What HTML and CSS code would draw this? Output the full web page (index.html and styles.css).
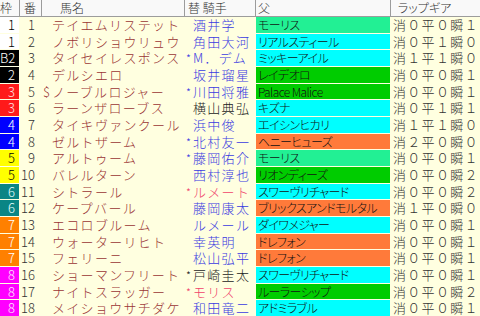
FILE: index.html
```html
<!DOCTYPE html>
<html lang="ja">
<head>
<meta charset="utf-8">
<link rel="stylesheet" href="styles.css">
</head>
<body>
<div class="sheet">
  <div class="head">
    <div class="h h-waku">枠</div>
    <div class="h h-ban">番</div>
    <div class="h h-name">馬名</div>
    <div class="h h-jockey">替 騎手</div>
    <div class="h h-sire">父</div>
    <div class="h h-lap">ラップギア</div>
  </div>

  <div class="row"><div class="waku w1">1</div><div class="ban">1</div><div class="name"><span class="mk"></span>テイエムリステット</div><div class="jockey"><span class="mk"></span>酒井学</div><div class="sire mint">モーリス</div><div class="lap">消０平０瞬１</div></div>
  <div class="row"><div class="waku w1">1</div><div class="ban">2</div><div class="name"><span class="mk"></span>ノボリショウリュウ</div><div class="jockey"><span class="mk"></span>角田大河</div><div class="sire cyan">リアルスティール</div><div class="lap">消０平１瞬０</div></div>
  <div class="row"><div class="waku w2">B2</div><div class="ban">3</div><div class="name"><span class="mk"></span>タイセイレスポンス</div><div class="jockey"><span class="mk">*</span>M．デム</div><div class="sire cyan">ミッキーアイル</div><div class="lap">消１平１瞬０</div></div>
  <div class="row"><div class="waku w2">2</div><div class="ban">4</div><div class="name"><span class="mk"></span>デルシエロ</div><div class="jockey"><span class="mk"></span>坂井瑠星</div><div class="sire green">レイデオロ</div><div class="lap">消０平０瞬１</div></div>
  <div class="row"><div class="waku w3">3</div><div class="ban">5</div><div class="name"><span class="mk">$</span>ノーブルロジャー</div><div class="jockey"><span class="mk">*</span>川田将雅</div><div class="sire green">Palace Malice</div><div class="lap">消０平０瞬１</div></div>
  <div class="row"><div class="waku w3">3</div><div class="ban">6</div><div class="name"><span class="mk"></span>ラーンザローブス</div><div class="jockey black"><span class="mk"></span>横山典弘</div><div class="sire cyan">キズナ</div><div class="lap">消０平１瞬１</div></div>
  <div class="row"><div class="waku w4">4</div><div class="ban">7</div><div class="name"><span class="mk"></span>タイキヴァンクール</div><div class="jockey"><span class="mk"></span>浜中俊</div><div class="sire cyan">エイシンヒカリ</div><div class="lap">消１平１瞬０</div></div>
  <div class="row"><div class="waku w4">4</div><div class="ban">8</div><div class="name"><span class="mk"></span>ゼルトザーム</div><div class="jockey"><span class="mk">*</span>北村友一</div><div class="sire orange">ヘニーヒューズ</div><div class="lap">消２平０瞬０</div></div>
  <div class="row"><div class="waku w5">5</div><div class="ban">9</div><div class="name"><span class="mk"></span>アルトゥーム</div><div class="jockey"><span class="mk">*</span>藤岡佑介</div><div class="sire mint">モーリス</div><div class="lap">消０平０瞬１</div></div>
  <div class="row"><div class="waku w5">5</div><div class="ban">10</div><div class="name"><span class="mk"></span>バレルターン</div><div class="jockey"><span class="mk"></span>西村淳也</div><div class="sire green">リオンディーズ</div><div class="lap">消０平０瞬２</div></div>
  <div class="row"><div class="waku w6">6</div><div class="ban">11</div><div class="name"><span class="mk"></span>シトラール</div><div class="jockey pink"><span class="mk">*</span>ルメート</div><div class="sire cyan">スワーヴリチャード</div><div class="lap">消０平０瞬２</div></div>
  <div class="row"><div class="waku w6">6</div><div class="ban">12</div><div class="name"><span class="mk"></span>ケープバール</div><div class="jockey"><span class="mk"></span>藤岡康太</div><div class="sire orange">ブリックスアンドモルタル</div><div class="lap">消１平０瞬０</div></div>
  <div class="row"><div class="waku w7">7</div><div class="ban">13</div><div class="name"><span class="mk"></span>エコロブルーム</div><div class="jockey"><span class="mk"></span>ルメール</div><div class="sire cyan">ダイワメジャー</div><div class="lap">消０平０瞬１</div></div>
  <div class="row"><div class="waku w7">7</div><div class="ban">14</div><div class="name"><span class="mk"></span>ウォーターリヒト</div><div class="jockey"><span class="mk"></span>幸英明</div><div class="sire orange">ドレフォン</div><div class="lap">消０平０瞬１</div></div>
  <div class="row"><div class="waku w7">7</div><div class="ban">15</div><div class="name"><span class="mk"></span>フェリーニ</div><div class="jockey"><span class="mk"></span>松山弘平</div><div class="sire orange">ドレフォン</div><div class="lap">消０平０瞬１</div></div>
  <div class="row"><div class="waku w8">8</div><div class="ban">16</div><div class="name"><span class="mk"></span>ショーマンフリート</div><div class="jockey black"><span class="mk">*</span>戸崎圭太</div><div class="sire cyan">スワーヴリチャード</div><div class="lap">消０平０瞬１</div></div>
  <div class="row"><div class="waku w8">8</div><div class="ban">17</div><div class="name"><span class="mk"></span>ナイトスラッガー</div><div class="jockey pink"><span class="mk">*</span>モリス</div><div class="sire green">ルーラーシップ</div><div class="lap">消０平０瞬２</div></div>
  <div class="row"><div class="waku w8">8</div><div class="ban">18</div><div class="name"><span class="mk"></span>メイショウサチダケ</div><div class="jockey"><span class="mk"></span>和田竜二</div><div class="sire cyan">アドミラブル</div><div class="lap">消０平０瞬１</div></div>
</div>
</body>
</html>
```
FILE: styles.css
```css
* { box-sizing: border-box; margin: 0; padding: 0; }
html, body { width: 480px; height: 316px; overflow: hidden; }
body {
  background: #ffffe0;
  font-family: "Noto Sans CJK JP", sans-serif;
  font-weight: 300;
}
.sheet { display: flex; flex-direction: column; }

.head, .row {
  display: grid;
  grid-template-columns: 20px 22px 143px 71px 135px 89px;
}

.head {
  height: 17px;
  background: #f9f9f9;
  border-bottom: 1px solid #9c9c9c;
  font-size: 12px;
  line-height: 16px;
  color: #333;
  font-feature-settings: "palt";
}
.h { border-right: 1px solid #9c9c9c; white-space: nowrap; }
.h-waku { padding-left: 0; }
.h-ban { padding-left: 4px; }
.h-name { padding-left: 18px; }
.h-jockey { padding-left: 3px; }
.h-sire { padding-left: 2px; }
.h-lap { padding-left: 7px; border-right: none; }

.row {
  height: 16.667px;
  font-size: 13px;
  line-height: 15.667px;
  white-space: nowrap;
}
.row > div { height: 15.667px; }

.waku {
  margin-right: 1px;
  text-align: right;
  padding-right: 4px;
}
.w1 { background: #ffffff; color: #000; }
.w2 { background: #000000; color: #fff; }
.w3 { background: #ff1a1a; color: #ffe0e0; }
.w4 { background: #0000ff; color: #fff; }
.w5 { background: #ffff00; color: #000; }
.w6 { background: #0a8585; color: #e8ffff; }
.w7 { background: #ff8000; color: #fff; }
.w8 { background: #ff00ff; color: #ffe8ff; }

.ban {
  text-align: right;
  padding-right: 7px;
  color: #333;
}

.name {
  padding-left: 1px;
  color: #9a3434;
  letter-spacing: 1.3px;
}
.name .mk { display: inline-block; width: 9px; letter-spacing: 0; }

.jockey {
  padding-left: 1px;
  color: #3b3be0;
  letter-spacing: 1.3px;
}
.jockey .mk { display: inline-block; width: 7px; letter-spacing: 0; font-size: 11px; }
.jockey.black { color: #222; }
.jockey.pink { color: #f0426a; }

.sire {
  margin-right: 1px;
  padding-left: 2px;
  font-size: 12px;
  letter-spacing: -0.6px;
  color: #111;
  font-feature-settings: "palt";
  overflow: hidden;
}
.mint { background: #22f094; }
.cyan { background: #00ffff; }
.green { background: #00cc00; }
.orange { background: #ff7a3a; }

.lap {
  padding-left: 2px;
  color: #333;
  letter-spacing: 1.3px;
}
```
